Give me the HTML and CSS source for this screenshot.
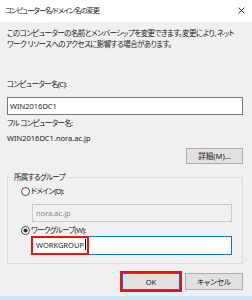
FILE: index.html
```html
<!DOCTYPE html>
<html lang="ja">
<head>
    <meta charset="UTF-8">
    <title>コンピューター名/ドメイン名の変更</title>
    <link rel="stylesheet" href="styles.css">
</head>
<body>
    <div class="window">
        <div class="titlebar">
            <span class="title">コンピューター名/ドメイン名の変更</span>
            <svg class="close" width="7" height="7" viewBox="0 0 7 7">
                <path d="M0.5 0.5 L6.5 6.5 M6.5 0.5 L0.5 6.5" stroke="#222" stroke-width="0.9" fill="none"/>
            </svg>
        </div>

        <div class="content">
            <p class="desc">このコンピューターの名前とメンバーシップを変更できます。変更により、ネット<br>ワーク リソースへのアクセスに影響する場合があります。</p>

            <div class="label first">コンピューター名(C):</div>
            <div class="textbox">WIN2016DC1</div>

            <div class="label full">フル コンピューター名:</div>
            <div class="value">WIN2016DC1.nora.ac.jp</div>

            <div class="row-right">
                <button class="btn more">詳細(M)...</button>
            </div>

            <!-- member of -->
            <fieldset class="group">
                <legend>所属するグループ</legend>
                <div class="radio">
                    <svg width="9" height="9" viewBox="0 0 9 9">
                        <circle cx="4.5" cy="4.5" r="4" fill="#fff" stroke="#333" stroke-width="0.9"/>
                    </svg>
                    <span>ドメイン(D):</span>
                </div>
                <div class="textbox disabled">nora.ac.jp</div>
                <div class="radio second">
                    <svg width="9" height="9" viewBox="0 0 9 9">
                        <circle cx="4.5" cy="4.5" r="4" fill="#fff" stroke="#333" stroke-width="0.9"/>
                        <circle cx="4.5" cy="4.5" r="2.1" fill="#333"/>
                    </svg>
                    <span>ワークグループ(W):</span>
                </div>
                <div class="textbox active">
                    <span class="mark">WORKGROUP<span class="caret"></span></span>
                </div>
            </fieldset>

            <div class="actions">
                <button class="btn ok">OK</button>
                <button class="btn">キャンセル</button>
            </div>
        </div>

        <div class="strip"></div>
    </div>
</body>
</html>
```

FILE: styles.css
```css
html, body {
    margin: 0;
    padding: 0;
}

body {
    width: 252px;
    height: 300px;
    overflow: hidden;
    background-color: #f0f0f0;
    font-family: "Noto Sans", "Noto Sans CJK JP", sans-serif;
    font-size: 7.5px;
    font-feature-settings: "palt";
    letter-spacing: -0.65px; /* narrow like Meiryo UI */
    color: #1a1a1a;
}

.window {
    display: flex;
    flex-direction: column;
    height: 300px;
}

.titlebar {
    height: 22px;
    background-color: #ffffff;
    display: flex;
    align-items: flex-start;
    justify-content: space-between;
    padding: 4px 7px 0 5px;
    box-sizing: border-box;
    line-height: 12px;
}

.title {
    font-size: 7.2px;
    letter-spacing: -0.9px;
    color: #222;
}

.close {
    margin-top: 3px;
}

.content {
    flex: 1;
    padding: 6px 9px 0 7px;
}

.desc {
    margin: 0;
    line-height: 11px;
    white-space: nowrap;
    letter-spacing: -0.55px;
}

.label {
    line-height: 12px;
}

.label.first {
    margin-top: 28px;
}

.label.full {
    margin-top: 2px;
}

.value {
    margin-top: 3px;
    line-height: 12px;
    letter-spacing: 0;
}

.textbox {
    height: 18px;
    box-sizing: border-box;
    border: 1px solid #7a7a7a;
    background-color: #ffffff;
    padding: 0 2px;
    line-height: 16px;
    margin-top: 7px;
    letter-spacing: 0;
}

.textbox.disabled {
    border-color: #cccccc;
    background-color: #f0f0f0;
    color: #8c8c8c;
    margin-left: 11px;
    padding: 0 3px;
}

.textbox.active {
    height: 19px;
    margin-top: 0;
    margin-left: 10px;
    border-color: #0078d7;
    padding: 0;
    line-height: 17px;
}

.mark {
    display: inline-block;
    height: 19px;
    margin: -1px 0 0 -1px;
    padding: 0 1px 0 3px;
    box-sizing: border-box;
    border: 2px solid #ee1111;
    line-height: 15px;
    vertical-align: top;
}

.caret {
    display: inline-block;
    width: 1px;
    height: 11px;
    margin-left: 1px;
    background-color: #000;
    vertical-align: -2px;
}

.row-right {
    display: flex;
    justify-content: flex-end;
    margin-top: 4px;
}

.btn {
    font: inherit;
    color: #1a1a1a;
    height: 16px;
    width: 58px;
    padding: 0;
    border: 1px solid #adadad;
    background-color: #e1e1e1;
    line-height: 14px;
}

.btn.more {
    width: 57px;
}

.group {
    margin: 7px 0 0 0;
    padding: 2px 10px 8px 13px;
    border: 1px solid #dcdcdc;
}

.group legend {
    margin-left: -8px;
    padding: 0 1px;
    line-height: 12px;
}

.radio {
    display: flex;
    align-items: center;
    gap: 1px;
    line-height: 12px;
}

.radio.second {
    margin-top: 2px;
}

.actions {
    display: flex;
    justify-content: flex-end;
    gap: 5px;
    margin-top: 9px;
}

.btn.ok {
    height: 17px;
    border-color: #0078d7;
    outline: 2px solid #ee1111;
    letter-spacing: 0;
}

.actions .btn {
    height: 17px;
}

.strip {
    height: 4px;
    background-color: #cde3f7;
}
```
